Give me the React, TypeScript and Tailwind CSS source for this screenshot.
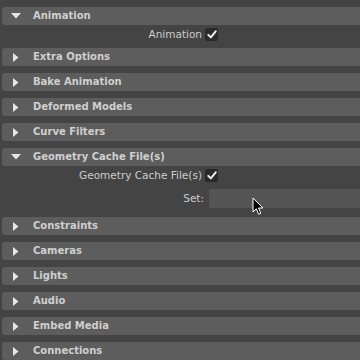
import React from "react";

const font = { fontFamily: '"DejaVu Sans", Verdana, sans-serif' };

function Header({ title, open }: { title: string; open?: boolean }) {
  return (
    <div className="flex h-[18px] items-center rounded-l-[3px] bg-[#5d5d5d]">
      <div className="flex w-[30px] shrink-0 items-center">
        {open ? (
          <svg width="10" height="6" viewBox="0 0 10 6" className="ml-[9px]">
            <polygon points="0,0 10,0 5,5.5" fill="#e6e6e6" />
          </svg>
        ) : (
          <svg width="6" height="9" viewBox="0 0 6 9" className="ml-[11px]">
            <polygon points="0,0 5.5,4.5 0,9" fill="#e6e6e6" />
          </svg>
        )}
      </div>
      <span className="ml-[1px] text-[10px] font-bold leading-none text-[#cfcfcf]">{title}</span>
    </div>
  );
}

function Check() {
  return (
    <div className="flex h-[13px] w-[13px] items-center justify-center rounded-[2px] bg-[#2a2a2a]">
      <svg width="10" height="9" viewBox="0 0 10 9">
        <path d="M1.3 4.9 L3.8 7.4 L8.7 1.3" stroke="#f0f0f0" strokeWidth="2" fill="none" strokeLinecap="round" strokeLinejoin="round" />
      </svg>
    </div>
  );
}

function CheckRow({ label }: { label: string }) {
  return (
    <div className="flex h-[13px] items-center">
      <div className="w-[200px] shrink-0 text-right text-[10.5px] leading-none text-[#cccccc]">{label}</div>
      <div className="ml-[3px]">
        <Check />
      </div>
    </div>
  );
}

const closedAfter = ["Constraints", "Cameras", "Lights", "Audio", "Embed Media", "Connections"];
const closedBefore = ["Extra Options", "Bake Animation", "Deformed Models", "Curve Filters"];

export default function App() {
  return (
    <div className="relative h-[360px] w-[360px] overflow-hidden bg-[#444444]" style={font}>
      <div className="flex flex-col gap-[7px] pl-[2px] pt-[7px]">
        <div>
          <Header title="Animation" open />
          <div className="pt-[3px]">
            <CheckRow label="Animation" />
          </div>
        </div>
        {closedBefore.map((t) => (
          <Header key={t} title={t} />
        ))}
        <div>
          <Header title="Geometry Cache File(s)" open />
          <div className="pb-[2px] pt-[3px]">
            <CheckRow label="Geometry Cache File(s)" />
            <div className="mt-[7px] flex h-[19px] items-center">
              <div className="w-[202px] shrink-0 text-right text-[10.5px] leading-none text-[#cccccc]">Set:</div>
              <div className="ml-[5px] h-[19px] flex-1 rounded-l-[2px] bg-[#555555]" />
            </div>
          </div>
        </div>
        {closedAfter.map((t) => (
          <Header key={t} title={t} />
        ))}
      </div>
      <svg className="absolute left-[252px] top-[197px]" width="13" height="19" viewBox="0 0 13 19">
        <path d="M1 1 L1 15 L4.3 11.8 L6.6 17.2 L8.8 16.3 L6.5 11 L11 11 Z" fill="#000" stroke="#fff" strokeWidth="1" strokeLinejoin="miter" />
      </svg>
    </div>
  );
}
